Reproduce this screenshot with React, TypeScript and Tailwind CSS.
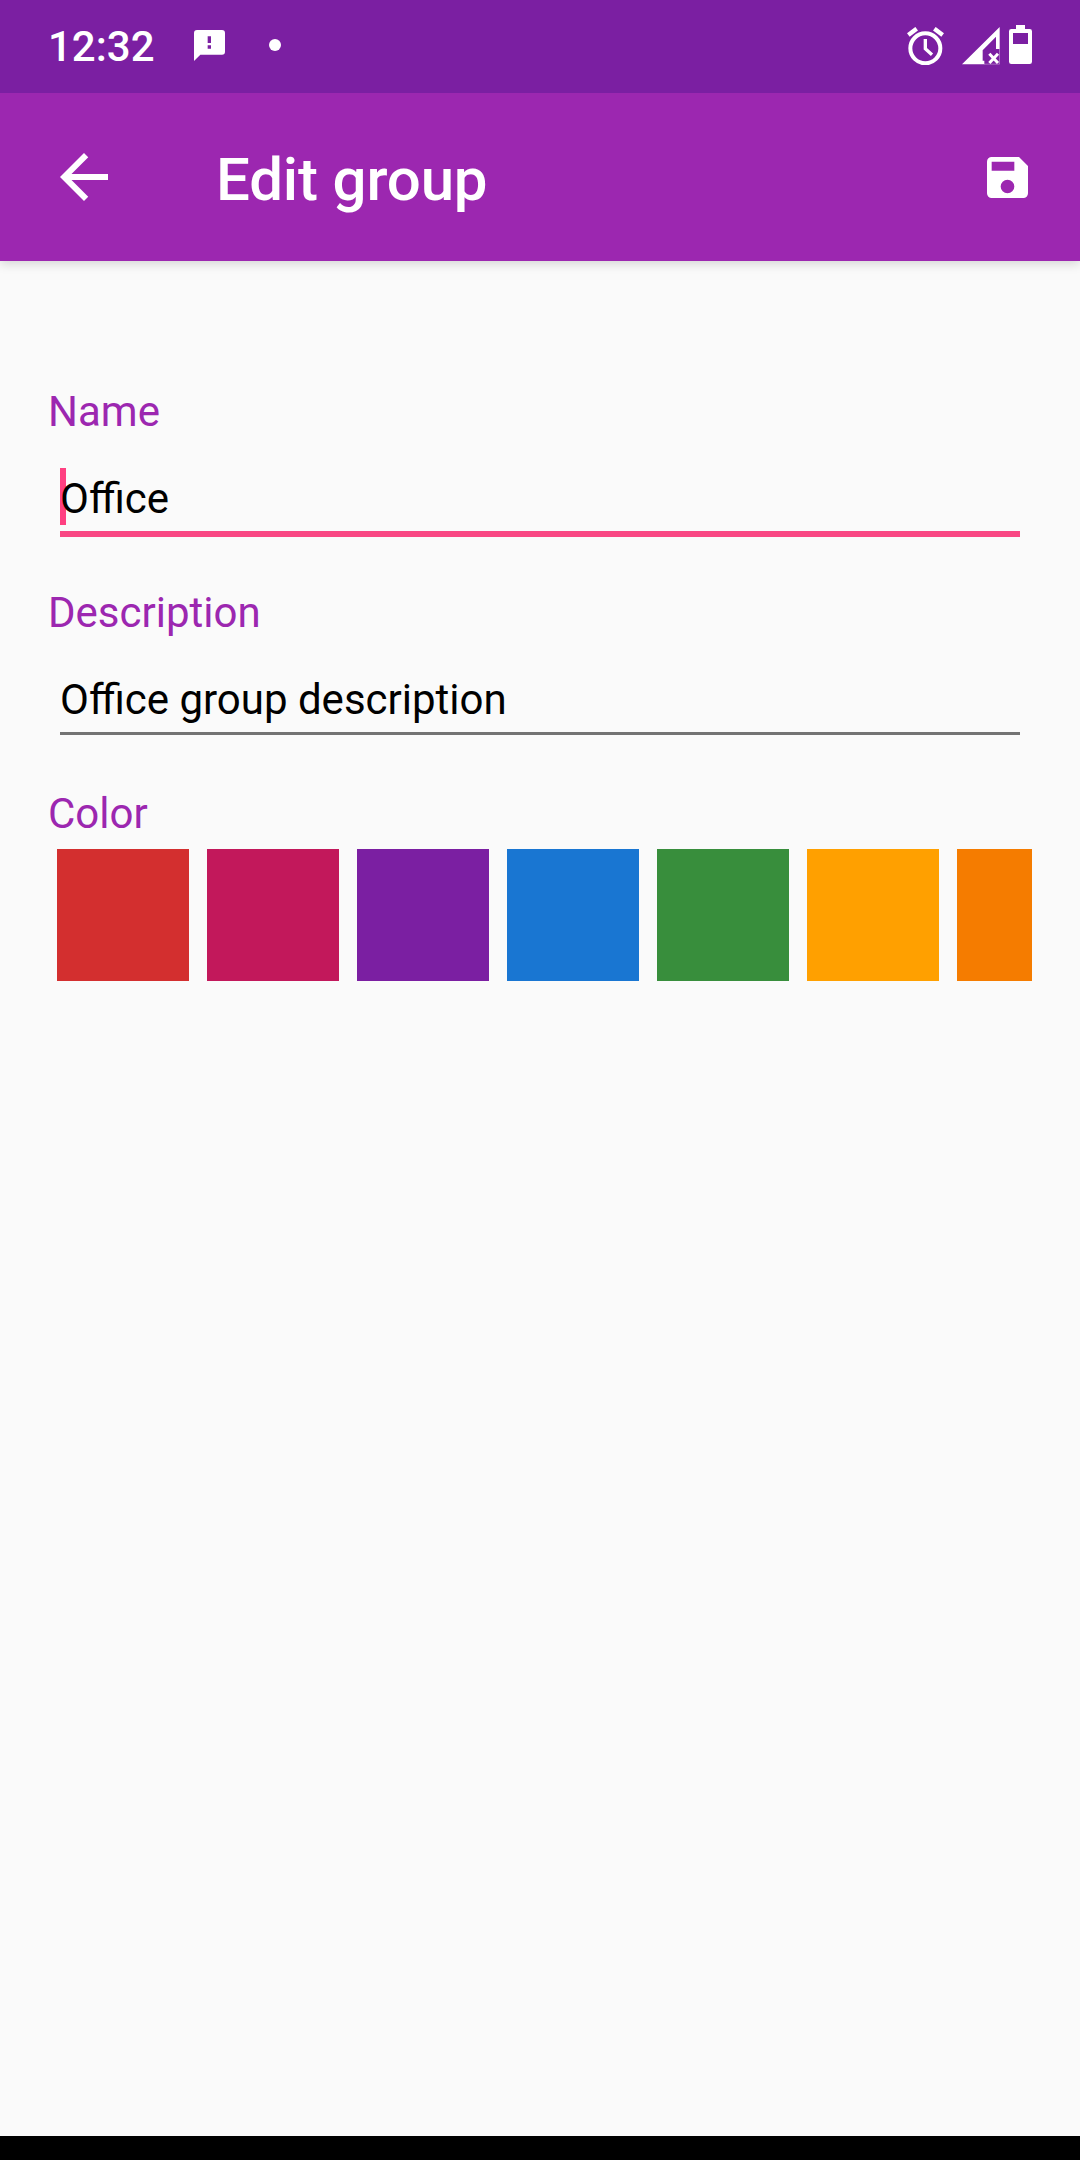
import { useState, type FC } from "react";
import { MdArrowBack } from "react-icons/md";

/* ============================================================
   STATUS BAR
============================================================ */

const MessageIcon: FC = () => (
  <svg viewBox="0 0 93 93" className="w-[31px] h-[31px]" fill="white">
    <path
      fillRule="evenodd"
      d="M9 0h75a9 9 0 0 1 9 9v56a9 9 0 0 1-9 9H19L0 93V9a9 9 0 0 1 9-9zM41 19v20h10V19zM41 46v10h10V46z"
    />
  </svg>
);

const AlarmIcon: FC = () => (
  <svg viewBox="0 0 111 114" className="w-[37px] h-[38px]" fill="none">
    <circle cx="55" cy="64" r="45" stroke="white" strokeWidth="12" />
    <path d="M4 24L29 5M82 5l25 19" stroke="white" strokeWidth="13" />
    <path d="M55 36v29l20 18" stroke="white" strokeWidth="10" />
  </svg>
);

const SignalIcon: FC = () => (
  <svg viewBox="0 0 114 114" className="w-[38px] h-[38px]" fill="none">
    <path
      d="M0 112L113 0v66h-11V29L62 70v31h5v11z"
      fill="white"
    />
    <path d="M82 80l26 28M108 80l-26 28" stroke="white" strokeWidth="9" />
    <path d="M66 111.500h46.500V66" stroke="white" strokeOpacity="0.5" strokeWidth="2" />
  </svg>
);

const BatteryIcon: FC = () => (
  <svg viewBox="0 0 69 117" className="w-[23px] h-[39px]" fill="white">
    <path
      fillRule="evenodd"
      d="M21 0h27v12h14a7 7 0 0 1 7 7v91a7 7 0 0 1-7 7H7a7 7 0 0 1-7-7V19a7 7 0 0 1 7-7h14zM12 24v33h45V24z"
    />
  </svg>
);

const StatusBar: FC = () => (
  <div className="relative z-10 h-[93px] shrink-0 bg-[#7b1fa2] text-white flex items-center justify-between px-12">
    <div className="flex items-center">
      <span className="text-[42px] leading-[56px] font-medium w-[146px]">
        12:32
      </span>
      <div className="-mt-[3px]">
        <MessageIcon />
      </div>
      <span className="ml-11 -mt-[3px] w-3 h-3 rounded-full bg-white" />
    </div>
    <div className="flex items-start h-10 -mt-1">
      <div className="mt-0.5">
        <AlarmIcon />
      </div>
      <div className="ml-[18px] mt-0.5">
        <SignalIcon />
      </div>
      <div className="ml-[9px]">
        <BatteryIcon />
      </div>
    </div>
  </div>
);

/* ============================================================
   TOOLBAR
============================================================ */

const SaveIcon: FC = () => (
  <svg viewBox="0 0 123 123" className="w-[41px] h-[41px]" fill="white">
    <path
      fillRule="evenodd"
      d="M14 0h82l27 27v82a14 14 0 0 1-14 14H14a14 14 0 0 1-14-14V14A14 14 0 0 1 14 0zM14 14v27h68V14zM61.500 68a20.500 20.500 0 1 0 0 41 20.500 20.500 0 0 0 0-41z"
    />
  </svg>
);

const Toolbar: FC = () => (
  <header className="relative h-[168px] shrink-0 bg-[#9c27b0] text-white flex items-center pl-12 pr-[52px] shadow-[0_3px_10px_rgba(0,0,0,0.15)]">
    <button aria-label="Back">
      <MdArrowBack className="w-[72px] h-[72px]" />
    </button>
    <h1 className="ml-24 pt-[5px] flex-1 text-[60px] leading-[70px] font-medium tracking-[-0.15px]">
      Edit group
    </h1>
    <button aria-label="Save">
      <SaveIcon />
    </button>
  </header>
);

/* ============================================================
   FORM
============================================================ */

interface FieldProps {
  label: string;
  value: string;
  focused: boolean;
  onFocus: () => void;
}

const Field: FC<FieldProps> = ({ label, value, focused, onFocus }) => (
  <div className="h-[201px]" onClick={onFocus}>
    <p className="text-[#9c27b0]">{label}</p>
    <div
      className={`relative mt-[31px] mx-3 pb-1 ${
        focused ? "border-b-6 border-[#f94783]" : "border-b-3 border-[#737373]"
      }`}
    >
      {/* caret */}
      {focused && (
        <span className="absolute left-0 -top-[3px] w-1.5 h-[57px] bg-[#ff4081]" />
      )}
      <p className="relative text-black">{value}</p>
    </div>
  </div>
);

const colors = [
  "bg-[#d32f2f]",
  "bg-[#c2185b]",
  "bg-[#7b1fa2]",
  "bg-[#1976d2]",
  "bg-[#388e3c]",
  "bg-[#ffa000]",
  "bg-[#f57c00]",
];

const App = () => {
  const [active, setActive] = useState("name");

  return (
    <div className="w-[1080px] h-[2160px] flex flex-col overflow-hidden bg-[#fafafa] font-[Roboto,sans-serif]">
      <StatusBar />
      <Toolbar />

      <main className="flex-1 px-12 pt-[123px] text-[42px] leading-[56px]">
        <Field
          label="Name"
          value="Office"
          focused={active === "name"}
          onFocus={() => setActive("name")}
        />
        <Field
          label="Description"
          value="Office group description"
          focused={active === "description"}
          onFocus={() => setActive("description")}
        />

        <p className="text-[#9c27b0]">Color</p>
        <div className="mt-[7px] pl-[9px] flex gap-[18px] overflow-hidden">
          {colors.map((color) => (
            <button
              key={color}
              aria-label="Color"
              className={`w-[132px] h-[132px] shrink-0 ${color}`}
            />
          ))}
        </div>
      </main>

      {/* navigation bar */}
      <div className="h-6 shrink-0 bg-black" />
    </div>
  );
};

export default App;
